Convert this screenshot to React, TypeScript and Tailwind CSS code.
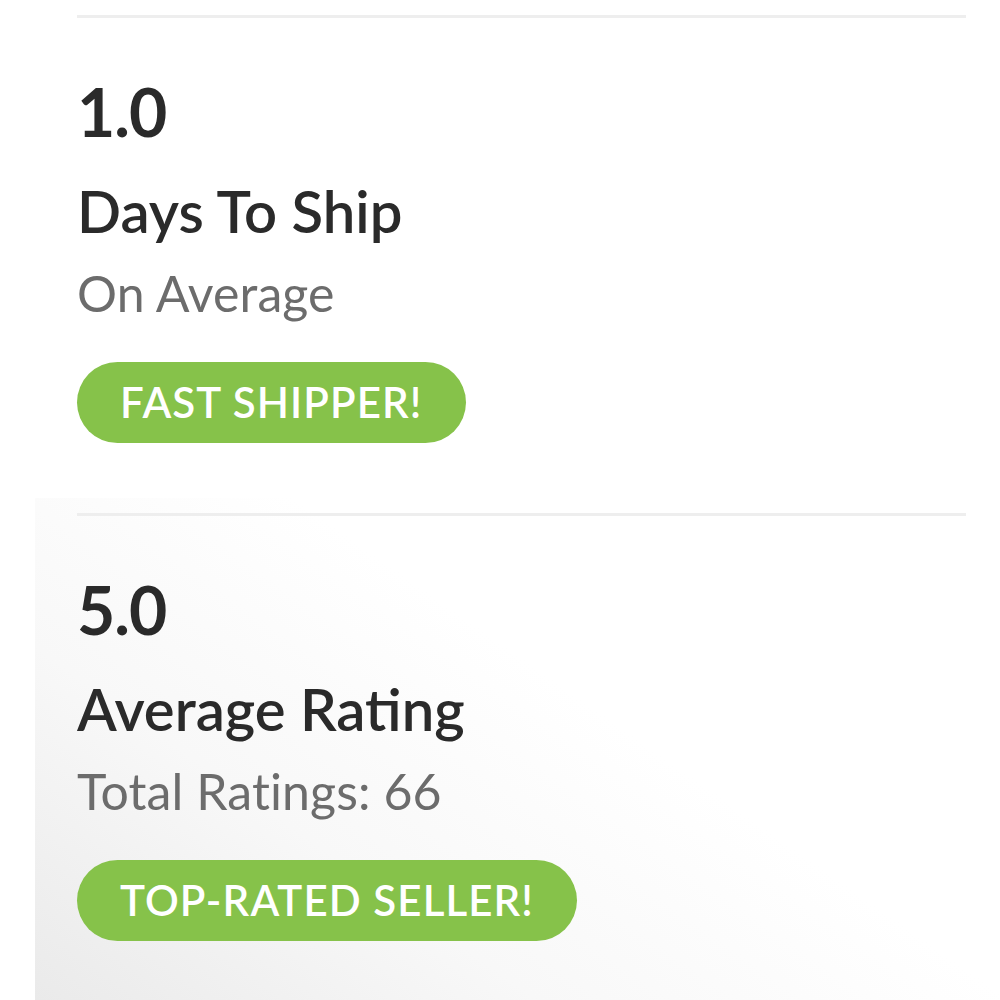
import React from "react";

function Section({
  value,
  title,
  sub,
  badge,
}: {
  value: string;
  title: string;
  sub: string;
  badge: string;
}) {
  return (
    <div className="flex flex-col">
      <div className="h-[3px] bg-[#eeeeee] mt-[15px]" />
      <div className="mt-[58px] text-[66px] leading-[72px] font-bold text-[#2a2a2a] tracking-[-1px]">
        {value}
      </div>
      <div className="mt-[31px] text-[58px] leading-[64px] font-semibold text-[#2a2a2a]">
        {title}
      </div>
      <div className="mt-[22px] text-[50px] leading-[56px] text-[#6c6c6c] tracking-[0.1px]">{sub}</div>
      <div className="mt-[41px] flex">
        <div className="h-[81px] rounded-full bg-[#86c24a] pl-[43px] pr-[43px] flex items-center text-white text-[42px] font-semibold tracking-[1.1px]">
          {badge}
        </div>
      </div>
    </div>
  );
}

export default function App() {
  return (
    <div
      className="w-[1000px] h-[1000px] overflow-hidden bg-white flex flex-col"
      style={{ fontFamily: '"Lato", "Open Sans", sans-serif' }}
    >
      <div className="pl-[77px] pr-[34px] h-[498px] shrink-0">
        <Section value="1.0" title="Days To Ship" sub="On Average" badge="FAST SHIPPER!" />
      </div>
      <div className="ml-[35px] pl-[42px] pr-[34px] flex-1 bg-[linear-gradient(35deg,#eaeaea_0%,#f8f8f8_30%,#ffffff_58%)]">
        <Section value="5.0" title="Average Rating" sub="Total Ratings: 66" badge="TOP-RATED SELLER!" />
      </div>
    </div>
  );
}
